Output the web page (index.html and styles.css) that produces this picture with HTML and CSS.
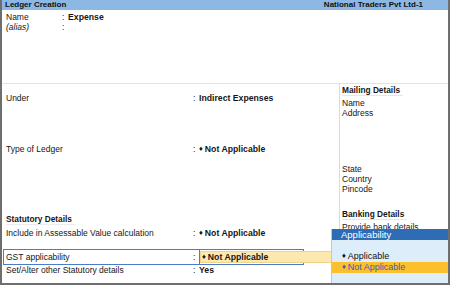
FILE: index.html
```html
<!DOCTYPE html>
<html>
<head>
<meta charset="utf-8">
<link rel="stylesheet" href="styles.css">
</head>
<body>
<div class="frame">
  <div class="titlebar">
    <span>Ledger Creation</span>
    <span>National Traders Pvt Ltd-1</span>
  </div>
  <div class="head">
    <div class="hrow"><span class="hlabel">Name</span><span class="colon">:</span><span class="bold">Expense</span></div>
    <div class="hrow"><span class="hlabel italic">(alias)</span><span class="colon">:</span></div>
  </div>
  <div class="body">
    <div class="left">
      <div class="row r-under"><span class="label">Under</span><span class="colon">:</span><span class="bold">Indirect Expenses</span></div>
      <div class="row r-type"><span class="label">Type of Ledger</span><span class="colon">:</span><span class="bold"><span class="dia">♦</span>Not Applicable</span></div>
      <div class="row r-stat"><span class="section">Statutory Details</span></div>
      <div class="row r-incl"><span class="label">Include in Assessable Value calculation</span><span class="colon">:</span><span class="bold"><span class="dia">♦</span>Not Applicable</span></div>
      <div class="gst">
        <div class="gst-label"><span class="label">GST applicability</span><span class="colon">:</span></div>
        <div class="gst-value"><div class="field bold"><span class="dia">♦</span>Not Applicable</div></div>
      </div>
      <div class="row"><span class="label">Set/Alter other Statutory details</span><span class="colon">:</span><span class="bold">Yes</span></div>
    </div>
    <div class="right">
      <div class="rhead r-mail">Mailing Details</div>
      <div class="rrow r-name">Name</div>
      <div class="rrow">Address</div>
      <div class="rrow r-state">State</div>
      <div class="rrow">Country</div>
      <div class="rrow">Pincode</div>
      <div class="rhead r-bank">Banking Details</div>
      <div class="rrow r-prov">Provide bank details</div>
    </div>
  </div>
  <div class="popup">
    <div class="ptitle">Applicability</div>
    <div class="pbody">
      <div class="pitem"><span class="pdia">♦</span>Applicable</div>
      <div class="pitem sel"><span class="pdia">♦</span>Not Applicable</div>
    </div>
  </div>
</div>
</body>
</html>
```

FILE: styles.css
```css
* { box-sizing: border-box; margin: 0; padding: 0; }
body {
  margin: 0;
  font-family: "Liberation Sans", Arial, sans-serif;
  font-size: 8.5px;
  color: #161616;
  background: #fff;
}
.frame {
  position: relative;
  width: 450px;
  height: 285px;
  border-left: 2px solid #6e6e6e;
  border-right: 2px solid #6e6e6e;
  border-bottom: 2px solid #6e6e6e;
  overflow: hidden;
}
.titlebar {
  height: 10px;
  background: #8db8e3;
  display: flex;
  justify-content: space-between;
  align-items: center;
  padding: 0 25px 0 3px;
  font-weight: bold;
  font-size: 8px;
  line-height: 10px;
  color: #111;
}
.head {
  height: 74px;
  border-bottom: 1px solid #e2e2e2;
  padding: 2px 0 0 4px;
}
.hrow { display: flex; height: 10px; line-height: 10px; }
.hlabel { width: 56px; }
.italic { font-style: italic; }
.colon { width: 6px; }
.bold { font-weight: bold; font-size: 8.7px; }
.dia { font-size: 7.5px; margin-right: 2px; position: relative; top: -1px; }
.body { display: flex; height: 199px; }
.left { width: 337px; }
.row { display: flex; height: 10px; line-height: 10px; padding-left: 4px; }
.label { width: 187px; }
.r-under { margin-top: 9px; }
.r-type { margin-top: 41px; }
.r-stat { margin-top: 60px; }
.section {
  font-weight: bold; font-size: 8.3px;
  border-bottom: 1px solid #ececec;
  padding-right: 4px;
  height: 11px;
}
.r-incl { margin-top: 4px; }
.gst {
  display: flex;
  margin-top: 11px;
  margin-left: 1px;
  height: 16px;
  width: 301px;
  border: 1px solid #4a7ccc;
}
.gst-label {
  display: flex;
  width: 195px;
  padding-left: 2px;
  line-height: 14px;
}
.gst-value {
  flex: 1;
  border-left: 1px solid #4a7ccc;
  padding-top: 1px;
}
.field {
  width: 136px;
  height: 12px;
  line-height: 11px;
  background: #fde8b0;
  border: 1px solid #f2d38c;
  padding-left: 1px;
  position: relative;
}
.right {
  flex: 1;
  border-left: 1px solid #dadada;
  padding-left: 2px;
}
.rhead {
  font-weight: bold; font-size: 8.3px;
  height: 11px; line-height: 10px;
  border-bottom: 1px solid #e6e6e6;
  width: max-content;
  padding-right: 3px;
  white-space: nowrap;
}
.r-mail { margin-top: 1px; }
.rrow { height: 10px; line-height: 10px; white-space: nowrap; }
.r-name { margin-top: 2px; }
.r-state { margin-top: 46px; }
.r-bank { margin-top: 15px; }
.r-prov { margin-top: 2px; }
.popup {
  position: absolute;
  left: 329px;
  top: 229px;
  width: 119px;
  height: 54px;
  background: #deedfa;
  border-left: 1px solid #b9c9dc;
}
.ptitle {
  height: 11px;
  line-height: 11px;
  background: #2e6cb6;
  color: #fff;
  font-size: 9.5px;
  padding-left: 9px;
}
.pbody { padding-top: 11px; }
.pitem { height: 11px; line-height: 11px; padding-left: 10px; color: #111; font-size: 9px; }
.pdia { font-size: 7.5px; margin-right: 2px; position: relative; top: -1px; }
.pitem.sel { background: #fcc02e; color: #3b5fae; }
```
